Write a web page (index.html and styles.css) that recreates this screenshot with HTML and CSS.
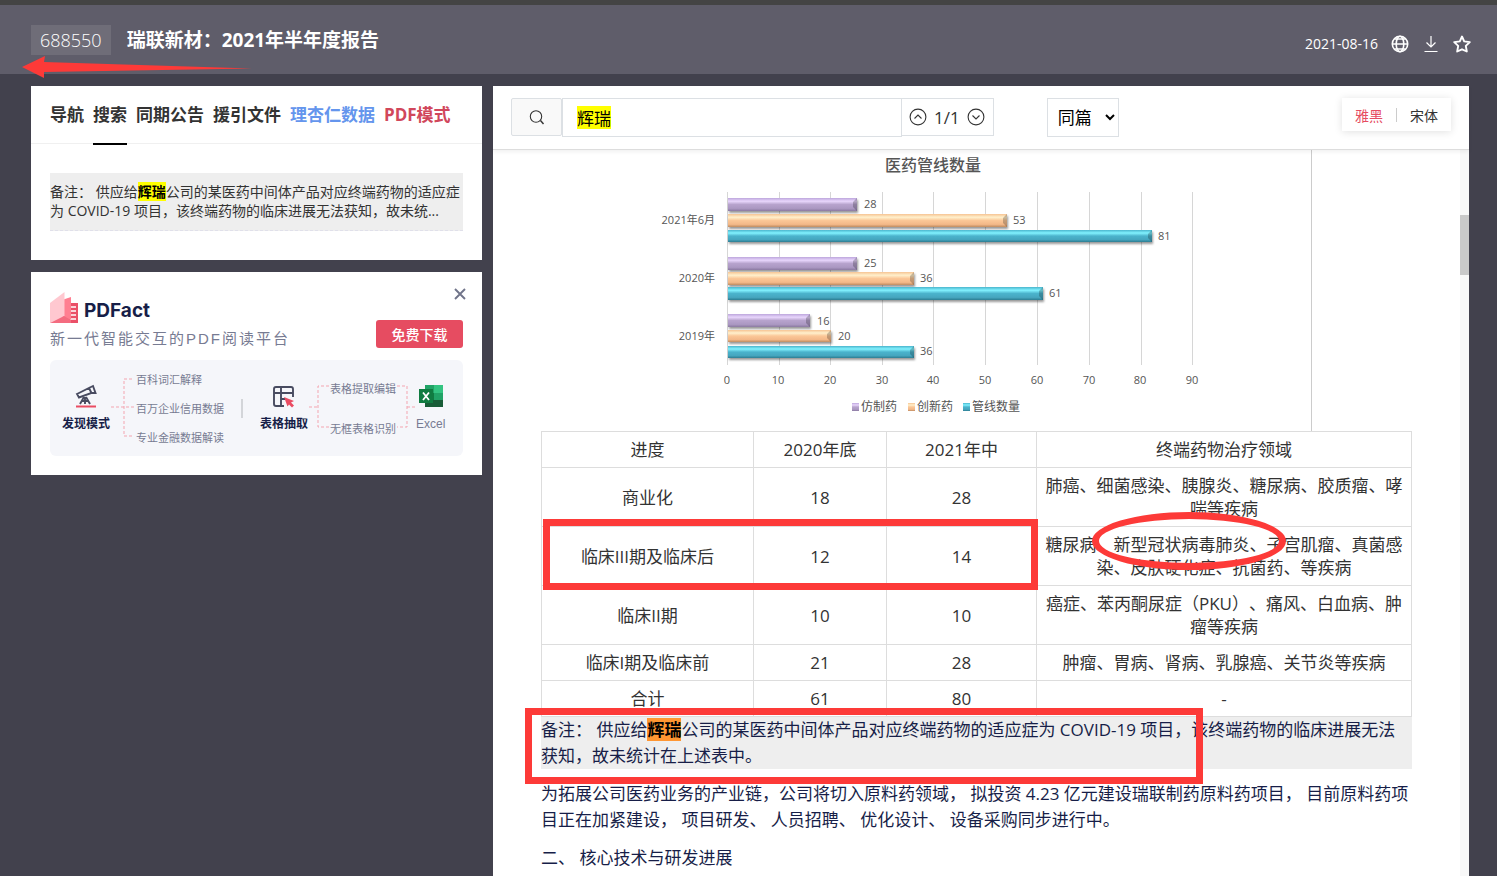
FILE: index.html
```html
<!DOCTYPE html>
<html lang="zh-CN">
<head>
<meta charset="utf-8">
<title>瑞联新材：2021年半年度报告</title>
<link rel="stylesheet" href="styles.css">
</head>
<body>
<header class="topbar">
  <span class="code">688550</span>
  <h1 class="title">瑞联新材：2021年半年度报告</h1>
  <div class="meta">
    <time>2021-08-16</time>
    <button class="icon-btn" aria-label="网页"><svg width="18" height="18" viewBox="0 0 18 18"><g fill="none" stroke="#fff" stroke-width="1.6"><circle cx="9" cy="9" r="7.7"/><ellipse cx="9" cy="9" rx="3.8" ry="7.7"/><path d="M1.3 9h15.4M3.5 4h11M3.5 14h11" stroke-width="1.3"/></g></svg></button>
    <button class="icon-btn" aria-label="下载"><svg width="18" height="18" viewBox="0 0 18 18"><path d="M9 1v11M4.500 7.500L9 12l4.500-4.500M2.500 16.500h13" fill="none" stroke="#fff" stroke-width="1.200"/></svg></button>
    <button class="icon-btn" aria-label="收藏"><svg width="18" height="18" viewBox="0 0 18 18"><path d="M9 1.500l2.200 4.900 5.600.7-4 3.800 1 5.600L9 14.300l-4.800 2.200 1-5.600-4-3.800 5.600-.7z" fill="none" stroke="#fff" stroke-width="1.900" stroke-linejoin="round"/></svg></button>
  </div>
  <svg class="arrow" width="230" height="22" viewBox="0 0 230 22" aria-hidden="true"><path d="M0 11L23 0l-1 6 208 6.500L22 16v6z" fill="#fd3a38"/></svg>
</header>
<main class="layout">
  <aside class="side">
    <section class="panel">
      <nav class="tabs">
        <a href="#nav">导航</a>
        <a href="#search" class="active">搜索</a>
        <a href="#same">同期公告</a>
        <a href="#files">援引文件</a>
        <a href="#data" class="blue">理杏仁数据</a>
        <a href="#pdf" class="red">PDF模式</a>
      </nav>
      <p class="result">备注： 供应给<mark>辉瑞</mark>公司的某医药中间体产品对应终端药物的适应症<br>为 COVID-19 项目，该终端药物的临床进展无法获知，故未统...</p>
    </section>
    <section class="panel promo">
      <div class="promo-head">
        <div>
          <div class="brand">
            <svg width="28" height="32" viewBox="0 0 28 32"><path d="M14 11h14v20H14z" fill="#ea5068"/><path d="M20 15h6M20 19h6M20 23h6M20 27h6" stroke="#fff" stroke-width="1.500"/><path d="M12 8l9-3v22l-9 4z" fill="#ff7f91"/><path d="M0 11L14.500 0v24L0 31z" fill="#ffc8d0"/><path d="M0 31l14-7 7 4v3z" fill="#f46c80"/></svg>
            <strong>PDFact</strong>
          </div>
          <p class="slogan">新一代智能交互的PDF阅读平台</p>
        </div>
        <div class="promo-side">
          <button class="close" aria-label="关闭"><svg width="12" height="12" viewBox="0 0 12 12"><path d="M1 1l10 10M11 1L1 11" stroke="#70748a" stroke-width="1.900"/></svg></button>
          <button class="download">免费下载</button>
        </div>
      </div>
      <div class="features">
        <div class="feature">
          <svg width="22" height="24" viewBox="0 0 22 24"><g fill="none" stroke="#484b60" stroke-width="1.900"><path d="M2 10l12-6 2.500 5L4 13.500zM14 4l4-2 2.500 7-4 0M10 13v7M9 13l-4 7M11 13l4 7M7 17h6"/></g><path d="M1 22.500h20" stroke="#ea4c62" stroke-width="2"/></svg>
          <b>发现模式</b>
        </div>
        <svg class="branch" width="24" height="62" viewBox="0 0 24 62"><path d="M0 30h24M21 2h-8v57h8" fill="none" stroke="#f3a5b0" stroke-dasharray="3 2"/></svg>
        <ul class="list">
          <li>百科词汇解释</li><li>百万企业信用数据</li><li>专业金融数据解读</li>
        </ul>
        <span class="bar"></span>
        <div class="feature">
          <svg width="22" height="24" viewBox="0 0 22 24"><path d="M11 22H3q-2 0-2-2V5q0-2 2-2h15q2 0 2 2v8M1 9h19M8 3v19M8 15h5" fill="none" stroke="#484b60" stroke-width="1.900"/><path d="M11 13l10 4-3 1.500 3 3-2 2-3-3-1.500 2z" fill="#ea4c62"/></svg>
          <b>表格抽取</b>
        </div>
        <svg class="branch" width="20" height="62" viewBox="0 0 20 62"><path d="M0 30h9M20 9H9v41h11" fill="none" stroke="#f3a5b0" stroke-dasharray="3 2"/></svg>
        <ul class="list two">
          <li>表格提取编辑</li><li>无框表格识别</li>
        </ul>
        <svg class="branch" width="18" height="62" viewBox="0 0 18 62"><path d="M0 9h10v41H0M10 30h8" fill="none" stroke="#f3a5b0" stroke-dasharray="3 2"/></svg>
        <div class="feature excel">
          <svg width="24" height="24" viewBox="0 0 24 24"><path d="M6 1h18v22H6z" fill="#21a366"/><path d="M15 1h9v8h-9z" fill="#33c481"/><path d="M6 9h9v7H6z" fill="#107c41"/><path d="M6 16h18v7H6z" fill="#185c37"/><path d="M0 5h14v14H0z" fill="#107c41"/><path d="M4 8.500l6 7.500M10 8.500L4 16" stroke="#fff" stroke-width="1.800"/></svg>
          <span>Excel</span>
        </div>
      </div>
    </section>
  </aside>
  <section class="reader">
    <form class="toolbar">
      <button type="button" class="search-btn" aria-label="搜索"><svg width="16" height="16" viewBox="0 0 16 16"><path d="M11.500 11.500L14.500 15" stroke="#333" stroke-width="1.400"/><circle cx="7" cy="7.500" r="5.700" fill="none" stroke="#333" stroke-width="1.100"/></svg></button>
      <input class="query" type="text" aria-label="关键词" value="辉瑞">
      <div class="pager">
        <button type="button" aria-label="上一个"><svg width="18" height="18" viewBox="0 0 18 18"><g fill="none" stroke="#333" stroke-width="1.100"><circle cx="9" cy="9" r="7.900"/><path d="M5.500 10.500L9 7l3.500 3.500"/></g></svg></button>
        <span>1/1</span>
        <button type="button" aria-label="下一个"><svg width="18" height="18" viewBox="0 0 18 18"><g fill="none" stroke="#333" stroke-width="1.100"><circle cx="9" cy="9" r="7.900"/><path d="M5.500 7.500L9 11l3.500-3.500"/></g></svg></button>
      </div>
      <select class="scope" aria-label="范围"><option>同篇</option></select>
      <div class="fonts"><button type="button" class="on">雅黑</button><i></i><button type="button">宋体</button></div>
    </form>
    <div class="scroll">
      <article class="doc">
        <figure class="chart">
          <svg width="670" height="281" viewBox="640 150 670 281">
            <defs>
              <linearGradient id="p" x2="0" y2="1"><stop offset="0" stop-color="#bda6dc"/><stop offset=".25" stop-color="#e8d6fc"/><stop offset=".5" stop-color="#b7a3cd"/><stop offset=".8" stop-color="#ab98c2"/><stop offset="1" stop-color="#8b7aa1"/></linearGradient>
              <linearGradient id="o" x2="0" y2="1"><stop offset="0" stop-color="#f6c493"/><stop offset=".25" stop-color="#fff0cc"/><stop offset=".5" stop-color="#fbc797"/><stop offset=".8" stop-color="#f3b888"/><stop offset="1" stop-color="#bf8c61"/></linearGradient>
              <linearGradient id="c" x2="0" y2="1"><stop offset="0" stop-color="#4ab5cd"/><stop offset=".25" stop-color="#82f2ff"/><stop offset=".5" stop-color="#4bb3cc"/><stop offset=".8" stop-color="#45a6bf"/><stop offset="1" stop-color="#2c7d92"/></linearGradient>
              <filter id="s" x="-5%" y="-20%" width="110%" height="170%"><feDropShadow dx="1" dy="2" stdDeviation="1" flood-opacity=".4"/></filter>
            </defs>
            <path d="M726.500 192v173M778.500 192v173M829.500 192v173M881.500 192v173M932.500 192v173M984.500 192v173M1036.500 192v173M1088.500 192v173M1140.500 192v173M1191.500 192v173" stroke="#d6d6d6"/>
            <g filter="url(#s)">
              <rect x="727" y="198" width="129" height="13" fill="url(#p)"/><rect x="727" y="214" width="279" height="13" fill="url(#o)"/><rect x="727" y="230" width="424" height="12" fill="url(#c)"/>
              <rect x="727" y="257" width="129" height="13" fill="url(#p)"/><rect x="727" y="272" width="186" height="13" fill="url(#o)"/><rect x="727" y="287" width="315" height="13" fill="url(#c)"/>
              <rect x="727" y="314" width="82" height="13" fill="url(#p)"/><rect x="727" y="330" width="103" height="12" fill="url(#o)"/><rect x="727" y="346" width="186" height="12" fill="url(#c)"/>
            </g>
            <g fill="#000" fill-opacity=".22">
              <path d="M856 198v13l-4-4v-5zM1006 214v13l-4-4v-5zM1151 230v12l-4-4v-4zM856 257v13l-4-4v-5zM913 272v13l-4-4v-5zM1042 287v13l-4-4v-5zM809 314v13l-4-4v-5zM830 330v12l-4-4v-4zM913 346v12l-4-4v-4z"/>
            </g>
            <g class="chart-text">
              <text class="chart-title" x="932" y="171" text-anchor="middle">医药管线数量</text>
              <g text-anchor="end"><text x="714" y="224">2021年6月</text><text x="714" y="282">2020年</text><text x="714" y="340">2019年</text></g>
              <g><text x="863" y="208">28</text><text x="1012" y="224">53</text><text x="1157" y="240">81</text><text x="863" y="267">25</text><text x="919" y="282">36</text><text x="1048" y="297">61</text><text x="816" y="325">16</text><text x="837" y="340">20</text><text x="919" y="355">36</text></g>
              <g text-anchor="middle"><text x="726" y="384">0</text><text x="777" y="384">10</text><text x="829" y="384">20</text><text x="881" y="384">30</text><text x="932" y="384">40</text><text x="984" y="384">50</text><text x="1036" y="384">60</text><text x="1088" y="384">70</text><text x="1139" y="384">80</text><text x="1191" y="384">90</text></g>
              <g class="legend"><text x="860" y="411">仿制药</text><text x="916" y="411">创新药</text><text x="971" y="411">管线数量</text></g>
            </g>
            <rect x="851" y="403" width="7" height="8" fill="url(#p)"/><rect x="907" y="403" width="7" height="8" fill="url(#o)"/><rect x="962" y="403" width="7" height="8" fill="url(#c)"/>
          </svg>
        </figure>
        <div class="table-wrap">
          <table>
            <colgroup><col class="c1"><col class="c2"><col class="c3"><col></colgroup>
            <tr><td>进度</td><td>2020年底</td><td>2021年中</td><td>终端药物治疗领域</td></tr>
            <tr><td>商业化</td><td>18</td><td>28</td><td>肺癌、细菌感染、胰腺炎、糖尿病、胶质瘤、哮喘等疾病</td></tr>
            <tr><td>临床III期及临床后</td><td>12</td><td>14</td><td>糖尿病、新型冠状病毒肺炎、子宫肌瘤、真菌感染、皮肤硬化症、抗菌药、等疾病</td></tr>
            <tr><td>临床II期</td><td>10</td><td>10</td><td>癌症、苯丙酮尿症（PKU）、痛风、白血病、肿瘤等疾病</td></tr>
            <tr><td>临床I期及临床前</td><td>21</td><td>28</td><td>肿瘤、胃病、肾病、乳腺癌、关节炎等疾病</td></tr>
            <tr><td>合计</td><td>61</td><td>80</td><td>-</td></tr>
          </table>
          <span class="box box-row"></span>
          <span class="oval"></span>
        </div>
        <div class="note-wrap">
          <p class="note">备注： 供应给<mark>辉瑞</mark>公司的某医药中间体产品对应终端药物的适应症为 COVID-19 项目，该终端药物的临床进展无法获知，故未统计在上述表中。</p>
          <span class="box box-note"></span>
        </div>
        <p>为拓展公司医药业务的产业链，公司将切入原料药领域， 拟投资 4.23 亿元建设瑞联制药原料药项目， 目前原料药项目正在加紧建设， 项目研发、 人员招聘、 优化设计、 设备采购同步进行中。</p>
        <p>二、 核心技术与研发进展</p>
      </article>
      <div class="track"><div class="thumb"></div></div>
    </div>
  </section>
</main>
</body>
</html>
```
FILE: styles.css
```css
* { box-sizing: border-box; }
body {
  margin: 0;
  height: 100vh;
  overflow: hidden;
  display: flex;
  flex-direction: column;
  background: #42414d;
  color: #333;
  font-family: "Open Sans", "Noto Sans CJK SC", sans-serif;
  font-size: 17px;
  text-spacing-trim: space-all;
}
p, h1, ul, figure { margin: 0; padding: 0; }
button { border: 0; background: none; padding: 0; font: inherit; color: inherit; display: flex; align-items: center; justify-content: center; }
svg { display: block; }

.topbar {
  position: relative;
  flex: none;
  height: 74px;
  border-top: 5px solid #444;
  background: #5f5d6a;
  color: #fff;
  display: flex;
  align-items: center;
  padding: 0 26px 0 31px;
}
.code { background: #6f6d78; padding: 0 9px; line-height: 30px; font-size: 18px; font-weight: 300; }
.title { margin-left: 16px; font-size: 19px; line-height: 30px; }
.meta { margin-left: auto; display: flex; align-items: center; gap: 13px; padding-top: 8px; font-size: 14px; }
.arrow { position: absolute; left: 22px; top: 51px; z-index: 2; }

.layout {
  flex: 1;
  min-height: 0;
  display: grid;
  grid-template-columns: 451px 1fr;
  gap: 11px;
  padding: 12px 28px 0 31px;
}
.side { display: flex; flex-direction: column; gap: 12px; }
.panel { background: #fff; }
.tabs { display: flex; gap: 9px; padding: 0 19px; border-bottom: 1px solid #f0f0f0; font-weight: 700; }
.tabs a { color: #333; text-decoration: none; line-height: 57px; height: 59px; margin-bottom: -2px; white-space: nowrap; }
.tabs .active { border-bottom: 2px solid #000; }
.tabs .blue { color: #6495ed; }
.tabs .red { color: #d1475b; }
.result { margin: 29px 19px; padding: 9px 0 10px; background: #eee; border-bottom: 1px dashed #e0e0ea; font-size: 14px; line-height: 19px; white-space: nowrap; }
mark { background: #ff0; color: #000; font-weight: 700; }

.promo { padding: 0 19px 19px; height: 203px; }
.promo-head { display: flex; justify-content: space-between; height: 88px; }
.brand { display: flex; align-items: flex-end; gap: 6px; padding-top: 20px; color: #171e48; font-size: 19px; line-height: 26px; }
.brand strong { font-family: Inter, sans-serif; font-weight: 700; }
.slogan { font-size: 15px; line-height: 30px; color: #777b92; letter-spacing: 2px; font-family: "Liberation Sans", "Noto Sans CJK SC", sans-serif; }
.promo-side { display: flex; flex-direction: column; align-items: flex-end; padding-top: 16px; gap: 20px; }
.close { width: 12px; height: 12px; margin-right: -3px; }
.download { width: 87px; height: 28px; border-radius: 3px; background: #e64c61; color: #fff; font-size: 14px; font-weight: 500; }
.features { height: 96px; border-radius: 6px; background: #f5f6fa; display: flex; align-items: center; padding-left: 12px; white-space: nowrap; font-family: "Liberation Sans", "Noto Sans CJK SC", sans-serif; font-size: 11px; color: #777b92; }
.feature { display: flex; flex-direction: column; align-items: center; gap: 7px; line-height: 18px; font-size: 12px; }
.feature b { color: #171e48; }
.branch { flex: none; margin: 0 1px; }
.list { list-style: none; display: flex; flex-direction: column; gap: 11px; line-height: 18px; padding-top: 1px; }
.two { gap: 22px; }
.bar { width: 2px; height: 19px; margin: 0 17px; background: #d3d5d9; }

.reader { background: #fff; min-height: 0; display: flex; flex-direction: column; }
.toolbar { flex: none; position: relative; display: flex; align-items: flex-start; height: 64px; padding: 12px 18px; border-bottom: 1px solid #ddd; box-shadow: 0 2px 4px rgba(0,0,0,.06); }
.search-btn { width: 51px; height: 38px; background: #f9f9f9; border: 1px solid #dce0e4; border-radius: 2px; }
.query { flex: 0 1 340px; min-width: 0; height: 39px; border: 1px solid #dce0e4; padding: 0 14px; font: inherit; color: #000; background: linear-gradient(#ff0, #ff0) 14px 50% / 34px 23px no-repeat #fff; }
.pager { display: flex; align-items: center; gap: 7px; height: 38px; padding: 0 8px 0 7px; border: 1px solid #dce0e4; border-left: 0; }
.scope { margin-left: 53px; width: 72px; height: 39px; border: 1px solid #dce0e4; background: #fff; color: #000; font: inherit; padding: 0 6px; }
.fonts { margin-left: auto; display: flex; align-items: center; gap: 13px; height: 33px; padding: 0 13px; font-size: 14px; box-shadow: 0 1px 8px rgba(0,0,0,.12); }
.fonts i { width: 1px; height: 14px; background: #ccc; }
.fonts .on { color: #e64c61; }

.scroll { flex: 1; min-height: 0; display: flex; overflow: hidden; }
.doc { flex: 1; padding: 0 48px; color: #171e48; line-height: 26px; }
.doc p { margin-bottom: 12px; }
.chart { width: 671px; margin: 0 auto; border-right: 1px solid #ccc; }
.chart-text { font-size: 11px; fill: #555; }
.chart-title { font-size: 16px; font-weight: 500; }
.legend { font-size: 12px; }
.table-wrap, .note-wrap { position: relative; }
table { width: 100%; table-layout: fixed; border-collapse: collapse; color: #333; line-height: 23px; text-align: center; }
.c1 { width: 212px; } .c2 { width: 133px; } .c3 { width: 150px; }
td { border: 1px solid #ddd; padding: 6px 7px; }
.doc .note { background: #eee; }
.note mark { background: #ff9632; }
.box, .oval { position: absolute; border: 7px solid #fd3a38; pointer-events: none; }
.box-row { left: 2px; top: 88px; width: 495px; height: 71px; }
.box-note { left: -16px; top: -9px; width: 678px; height: 76px; }
.oval { left: 551px; top: 81px; width: 194px; height: 58px; border-radius: 50%; }
.track { flex: none; width: 9px; background: #f8f8f8; padding-top: 65px; }
.thumb { height: 60px; background: #c9c9c9; }
```
